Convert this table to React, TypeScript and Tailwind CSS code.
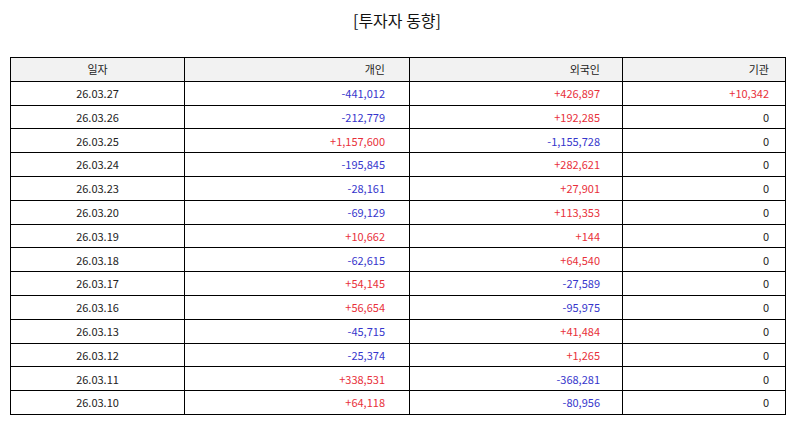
const rows: [string, string, string, string][] = [
  ['26.03.27', '-441,012', '+426,897', '+10,342'],
  ['26.03.26', '-212,779', '+192,285', '0'],
  ['26.03.25', '+1,157,600', '-1,155,728', '0'],
  ['26.03.24', '-195,845', '+282,621', '0'],
  ['26.03.23', '-28,161', '+27,901', '0'],
  ['26.03.20', '-69,129', '+113,353', '0'],
  ['26.03.19', '+10,662', '+144', '0'],
  ['26.03.18', '-62,615', '+64,540', '0'],
  ['26.03.17', '+54,145', '-27,589', '0'],
  ['26.03.16', '+56,654', '-95,975', '0'],
  ['26.03.13', '-45,715', '+41,484', '0'],
  ['26.03.12', '-25,374', '+1,265', '0'],
  ['26.03.11', '+338,531', '-368,281', '0'],
  ['26.03.10', '+64,118', '-80,956', '0'],
];

function tone(value: string) {
  if (value.startsWith('+')) return 'text-[#e8303a]';
  if (value.startsWith('-')) return 'text-[#3636cc]';
  return 'text-[#222]';
}

export default function App() {
  return (
    <div className="h-[425px] w-[794px] bg-white font-['Noto_Sans_CJK_KR','Noto_Sans',sans-serif] text-[#222]">
      <div className="flex h-[38px] items-center justify-center pt-[2px] text-[16px] text-[#111]">
        [투자자 동향]
      </div>
      <table className="ml-[10px] mt-[19px] w-[776px] table-fixed border-collapse text-[11px]">
        <colgroup>
          <col className="w-[174px]" />
          <col className="w-[225px]" />
          <col className="w-[213px]" />
          <col className="w-[163px]" />
        </colgroup>
        <thead>
          <tr className="h-[23.8px] bg-[#f2f2f2]">
            <th className="border border-black text-center font-normal">일자</th>
            <th className="border border-black pr-[24px] text-right font-normal">개인</th>
            <th className="border border-black pr-[22px] text-right font-normal">외국인</th>
            <th className="border border-black pr-[16px] text-right font-normal">기관</th>
          </tr>
        </thead>
        <tbody>
          {rows.map(([date, retail, foreign, inst]) => (
            <tr key={date} className="h-[23.8px]">
              <td className="border border-black text-center">{date}</td>
              <td className={`border border-black pr-[24px] text-right ${tone(retail)}`}>{retail}</td>
              <td className={`border border-black pr-[22px] text-right ${tone(foreign)}`}>{foreign}</td>
              <td className={`border border-black pr-[16px] text-right ${tone(inst)}`}>{inst}</td>
            </tr>
          ))}
        </tbody>
      </table>
    </div>
  );
}
